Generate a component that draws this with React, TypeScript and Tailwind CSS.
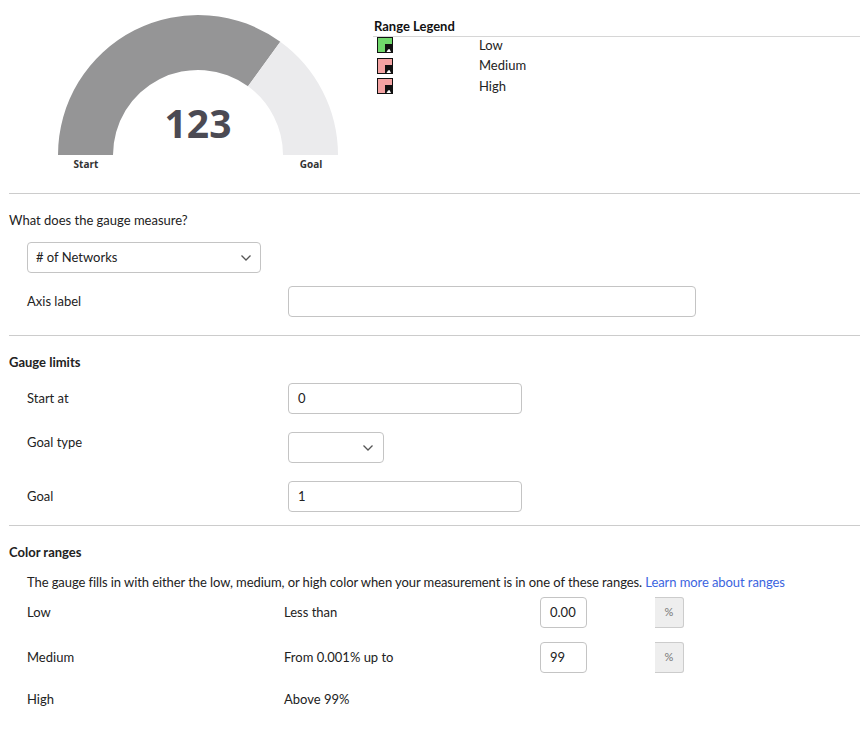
import React from "react";

const font = { fontFamily: "Lato, 'Noto Sans', sans-serif" };

function Chevron() {
  return (
    <svg width="12" height="8" viewBox="0 0 12 8" className="shrink-0">
      <polyline points="1.5,1.5 6,6 10.5,1.5" fill="none" stroke="#555" strokeWidth="1.3" />
    </svg>
  );
}

function LegendIcon({ color }: { color: string }) {
  return (
    <svg width="16" height="16" viewBox="0 0 16 16" className="shrink-0">
      <rect x="0.5" y="0.5" width="15" height="15" fill={color} stroke="#111" />
      <rect x="8" y="7" width="7" height="8" fill="#111" />
      <path d="M9.5 15 L11 12.5 L12.5 12 L14 15 Z" fill="#fff" />
    </svg>
  );
}

function Gauge() {
  return (
    <svg width="356" height="193" viewBox="0 0 356 193">
      <path d="M49 155 A140 140 0 0 1 271.3 41.7 L239 86.2 A85 85 0 0 0 104 155 Z" fill="#959596" />
      <path d="M271.3 41.7 A140 140 0 0 1 329 155 L274 155 A85 85 0 0 0 239 86.2 Z" fill="#ebebed" />
      <text x="189" y="138" textAnchor="middle" fontSize="39" fontWeight="700" fill="#4b4a53" fontFamily="'Open Sans', sans-serif">
        123
      </text>
      <text x="77" y="168" textAnchor="middle" fontSize="10" fontWeight="700" fill="#333" fontFamily="'Open Sans', sans-serif">
        Start
      </text>
      <text x="302" y="168" textAnchor="middle" fontSize="10" fontWeight="700" fill="#333" fontFamily="'Open Sans', sans-serif">
        Goal
      </text>
    </svg>
  );
}

function TextBox({ value, w }: { value: string; w: string }) {
  return (
    <div className={`${w} h-[31px] border border-[#c4c4c4] rounded-[4px] flex items-center pl-[9px] text-[13px] text-[#222] bg-white`}>
      {value}
    </div>
  );
}

export default function App() {
  return (
    <div className="w-[860px] min-h-[729px] bg-white text-[13px] text-[#222] pl-[9px] overflow-hidden" style={font}>
      {/* top: gauge + legend */}
      <div className="flex h-[193px]">
        <div className="w-[356px]">
          <Gauge />
        </div>
        <div className="flex-1 ml-2">
          <div className="h-[37px] border-b border-[#d6d6d6] flex items-end pb-0 pl-[1px] font-bold text-[13px] text-[#111]">
            Range Legend
          </div>
          <div className="-mt-[2px]">
            {[
              ["Low", "#70d86b"],
              ["Medium", "#f3a2a2"],
              ["High", "#f3a2a2"],
            ].map(([label, color]) => (
              <div key={label} className="flex items-center h-[20.5px]">
                <div className="w-[106px] pl-[4px] flex">
                  <LegendIcon color={color} />
                </div>
                <span className="text-[13px] text-[#222]">{label}</span>
              </div>
            ))}
          </div>
        </div>
      </div>

      {/* measure */}
      <div className="border-t border-[#cccccc]">
        <div className="mt-4 h-5 leading-5">What does the gauge measure?</div>
        <div className="ml-[18px] mt-3 w-[234px] h-[31px] border border-[#c4c4c4] rounded-[4px] flex items-center justify-between pl-2 pr-2">
          <span>
            # of Networks
          </span>
          <Chevron />
        </div>
        <div className="flex items-center mt-[13px] pl-[18px]">
          <div className="w-[261px]">Axis label</div>
          <TextBox value="" w="w-[408px]" />
        </div>
        <div className="h-[18px]" />
      </div>

      {/* gauge limits */}
      <div className="border-t border-[#cccccc]">
        <div className="mt-4 h-5 leading-5 font-bold">Gauge limits</div>
        <div className="flex items-center mt-[11px] pl-[18px]">
          <div className="w-[261px]">Start at</div>
          <TextBox value="0" w="w-[234px]" />
        </div>
        <div className="flex items-center mt-[18px] pl-[18px]">
          <div className="w-[261px] -mt-[10px]">Goal type</div>
          <div className="w-[96px] h-[31px] border border-[#c4c4c4] rounded-[4px] flex items-center justify-end pr-[9px]">
            <Chevron />
          </div>
        </div>
        <div className="flex items-center mt-[18px] pl-[18px]">
          <div className="w-[261px]">Goal</div>
          <TextBox value="1" w="w-[234px]" />
        </div>
        <div className="h-[13px]" />
      </div>

      {/* color ranges */}
      <div className="border-t border-[#cccccc]">
        <div className="mt-4 h-5 leading-5 font-bold">Color ranges</div>
        <div className="mt-[10px] h-5 leading-5 pl-[18px] whitespace-nowrap tracking-[-0.08px]">
          The gauge fills in with either the low, medium, or high color when your measurement is in one of these ranges.{" "}
          <span className="text-[#3b64e0]">Learn more about ranges</span>
        </div>
        {[
          ["Low", "Less than", "0.00"],
          ["Medium", "From 0.001% up to", "99"],
        ].map(([label, desc, val], i) => (
          <div key={label} className={`flex items-center pl-[18px] ${i === 0 ? "mt-[5px]" : "mt-[14px]"}`}>
            <div className="w-[257px]">{label}</div>
            <div className="w-[256px]">{desc}</div>
            <div className="w-[47px] h-[31px] border border-[#c4c4c4] rounded-[4px] flex items-center pl-[9px] bg-white">
              {val}
            </div>
            <div className="ml-[68px] w-[29px] h-[31px] bg-[#eeeeee] border-y border-r border-[#cccccc] rounded-r-[3px] flex items-center justify-center text-[11px] text-[#777]">
              %
            </div>
          </div>
        ))}
        <div className="flex items-center pl-[18px] mt-[17px] h-5">
          <div className="w-[257px]">High</div>
          <div className="w-[256px]">Above 99%</div>
        </div>
      </div>
    </div>
  );
}
